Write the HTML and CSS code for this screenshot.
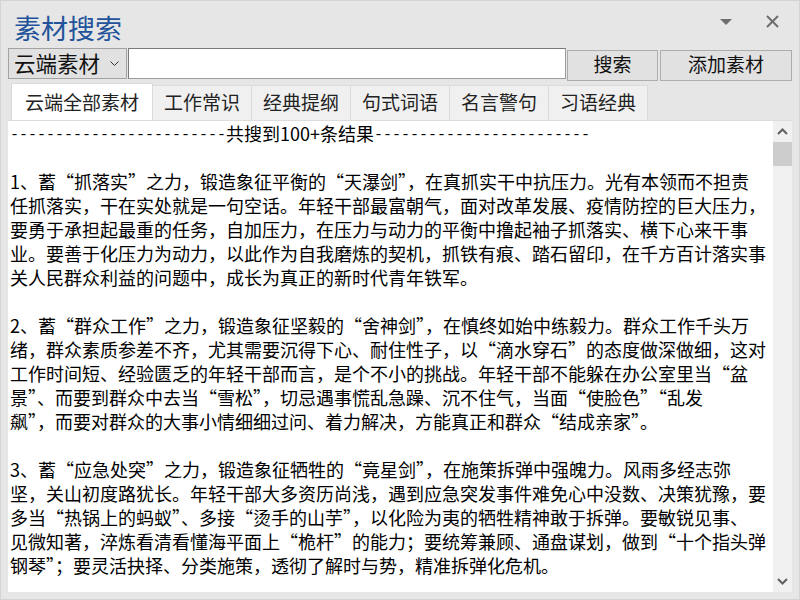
FILE: index.html
```html
<!DOCTYPE html>
<html>
	<head>
		<meta charset="utf-8" />
		<title>素材搜索</title>
		<link rel="stylesheet" href="styles.css">
	</head>
	<body>
		<div id="win">
			<div id="titlebar">
				<p id="title">素材搜索</p>
				<div id="title_btns">
					<span class="tb_btn">
						<svg width="12" height="6" viewBox="0 0 12 6"><polygon points="0,0 12,0 6,6" fill="#6e6e6e"/></svg>
					</span>
					<span class="tb_btn">
						<svg width="13" height="13" viewBox="0 0 13 13"><path d="M1 1 L12 12 M12 1 L1 12" stroke="#6e6e6e" stroke-width="2"/></svg>
					</span>
				</div>
			</div>
			<div id="toolbar">
				<div id="source">
					<span>云端素材</span>
					<svg width="9" height="6" viewBox="0 0 9 6"><polyline points="0.5,0.5 4.5,4.5 8.5,0.5" fill="none" stroke="#333" stroke-width="1"/></svg>
				</div>
				<input type="text" id="keyword" />
				<button class="btn" id="btn_search">搜索</button>
				<button class="btn" id="btn_add">添加素材</button>
			</div>
			<div id="tabs">
				<span class="tab active">云端全部素材</span>
				<span class="tab">工作常识</span>
				<span class="tab">经典提纲</span>
				<span class="tab">句式词语</span>
				<span class="tab">名言警句</span>
				<span class="tab">习语经典</span>
			</div>
			<div id="panel">
				<div id="result">
					<p class="sum"><span class="dash">------------------------</span>共搜到100+条结果<span class="dash">------------------------</span></p>
					<p>1、蓄“抓落实”之力，锻造象征平衡的“天瀑剑”，在真抓实干中抗压力。光有本领而不担责<br>任抓落实，干在实处就是一句空话。年轻干部最富朝气，面对改革发展、疫情防控的巨大压力，<br>要勇于承担起最重的任务，自加压力，在压力与动力的平衡中撸起袖子抓落实、横下心来干事<br>业。要善于化压力为动力，以此作为自我磨炼的契机，抓铁有痕、踏石留印，在千方百计落实事<br>关人民群众利益的问题中，成长为真正的新时代青年铁军。</p>
					<p>2、蓄“群众工作”之力，锻造象征坚毅的“舍神剑”，在慎终如始中练毅力。群众工作千头万<br>绪，群众素质参差不齐，尤其需要沉得下心、耐住性子，以“滴水穿石”的态度做深做细，这对<br>工作时间短、经验匮乏的年轻干部而言，是个不小的挑战。年轻干部不能躲在办公室里当“盆<br>景”、而要到群众中去当“雪松”，切忌遇事慌乱急躁、沉不住气，当面“使脸色”“乱发<br>飙”，而要对群众的大事小情细细过问、着力解决，方能真正和群众“结成亲家”。</p>
					<p>3、蓄“应急处突”之力，锻造象征牺牲的“竟星剑”，在施策拆弹中强魄力。风雨多经志弥<br>坚，关山初度路犹长。年轻干部大多资历尚浅，遇到应急突发事件难免心中没数、决策犹豫，要<br>多当“热锅上的蚂蚁”、多接“烫手的山芋”，以化险为夷的牺牲精神敢于拆弹。要敏锐见事、<br>见微知著，淬炼看清看懂海平面上“桅杆”的能力；要统筹兼顾、通盘谋划，做到“十个指头弹<br>钢琴”；要灵活抉择、分类施策，透彻了解时与势，精准拆弹化危机。</p>
				</div>
				<div id="scrollbar">
					<span class="arrow">
						<svg width="11" height="7" viewBox="0 0 11 7"><polyline points="1,6 5.5,1.5 10,6" fill="none" stroke="#606060" stroke-width="2"/></svg>
					</span>
					<div id="thumb"></div>
					<div id="track"></div>
					<span class="arrow">
						<svg width="11" height="7" viewBox="0 0 11 7"><polyline points="1,1 5.5,5.5 10,1" fill="none" stroke="#606060" stroke-width="2"/></svg>
					</span>
				</div>
			</div>
		</div>
	</body>
</html>
```

FILE: styles.css
```css
*{
	box-sizing: border-box;
}
body{
	margin: 0;
	font-family: "Noto Sans CJK SC", sans-serif;
}
p{
	margin: 0;
}
#win{
	width: 800px;
	height: 600px;
	background: #e6e6e6;
	border: 1px solid #d4d4d4;
	padding: 0 7px;
	display: flex;
	flex-direction: column;
}
#titlebar{
	height: 47px;
	display: flex;
	align-items: center;
	justify-content: space-between;
	padding-left: 6px;
}
#title{
	font-size: 27px;
	color: #23539a;
	line-height: 30px;
	margin-top: 6px;
}
#title_btns{
	display: flex;
	align-items: center;
	gap: 34px;
	margin-right: 13px;
	margin-top: -6px;
}
.tb_btn{
	display: flex;
}
#toolbar{
	display: flex;
	height: 33px;
}
#source{
	width: 119px;
	height: 31px;
	background: #e1e1e1;
	border: 1px solid #a2a2a2;
	display: flex;
	align-items: center;
	justify-content: space-between;
	padding: 0 7px 2px 5px;
	font-size: 21.5px;
	color: #111;
}
#source svg{
	margin-top: 2px;
}
#keyword{
	flex: 1;
	height: 31px;
	margin: 0 1px 0 1px;
	border: 1px solid #7a7a7a;
	border-right-color: #9c9c9c;
	border-bottom-color: #9c9c9c;
	background: #fff;
	outline: none;
}
.btn{
	height: 31px;
	margin-top: 2px;
	background: #e1e1e1;
	border: 1px solid #adadad;
	font-family: "Noto Sans CJK SC", sans-serif;
	font-size: 19px;
	line-height: 20px;
	color: #111;
	padding: 0 0 4px;
}
#btn_search{
	width: 91px;
}
#btn_add{
	width: 132px;
	margin-left: 2px;
}
#tabs{
	display: flex;
	align-items: flex-end;
	height: 39px;
	padding-left: 3px;
}
.tab{
	width: 99px;
	height: 35px;
	background: #f0f0f0;
	border: 1px solid #dadada;
	border-left: none;
	border-bottom: none;
	display: flex;
	align-items: center;
	justify-content: center;
	font-size: 19px;
	color: #222;
	padding-bottom: 4px;
}
.tab.active{
	width: 142px;
	height: 37px;
	background: #fff;
	border-left: 1px solid #dadada;
	padding-bottom: 2px;
}
#panel{
	height: 472px;
	background: #fff;
	border-top: 1px solid #dcdcdc;
	display: flex;
}
#result{
	flex: 1;
	overflow: hidden;
	padding: 0 0 0 2px;
	font-family: "Noto Sans CJK SC", sans-serif;
	font-size: 18px;
	line-height: 24px;
	color: #000;
	white-space: nowrap;
}
#result p{
	margin-bottom: 24px;
}
.dash{
	display: inline-block;
	height: 24px;
	font-family: "Liberation Mono", monospace;
	font-size: 15px;
	line-height: 30px;
	vertical-align: top;
}
#scrollbar{
	width: 19px;
	background: #f0f0f0;
	display: flex;
	flex-direction: column;
	align-items: center;
}
.arrow{
	height: 21px;
	display: flex;
	align-items: center;
	justify-content: center;
}
#thumb{
	width: 19px;
	height: 24px;
	background: #cdcdcd;
}
#track{
	flex: 1;
}
```
